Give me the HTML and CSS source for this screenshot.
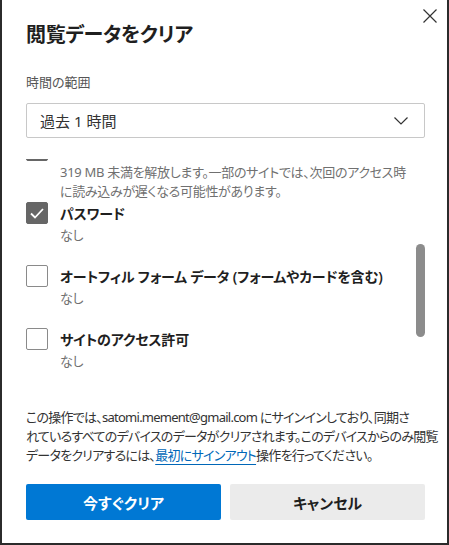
FILE: index.html
```html
<!DOCTYPE html>
<html lang="ja">
<head>
<meta charset="UTF-8">
<title>閲覧データをクリア</title>
<link rel="stylesheet" href="styles.css">
</head>
<body>

<div class="dialog">
    <button class="close" aria-label="閉じる">
        <svg width="14" height="14" viewBox="0 0 14 14"><path d="M0.5 0.5 L13.5 13.5 M13.5 0.5 L0.5 13.5" stroke="#333" stroke-width="1.2" fill="none"/></svg>
    </button>

    <h1>閲覧データをクリア</h1>

    <div class="field-label">時間の範囲</div>
    <div class="select">
        <span>過去 1 時間</span>
        <svg width="14" height="8" viewBox="0 0 14 8"><path d="M0.5 0.5 L7 7 L13.5 0.5" stroke="#333" stroke-width="1.2" fill="none"/></svg>
    </div>

    <!-- 一覧 (スクロール済み) -->
    <div class="list">
        <div class="items">
            <div class="item">
                <span class="box checked"></span>
                <div class="text">
                    <div class="name">キャッシュされた画像とファイル</div>
                    <div class="desc">319 MB 未満を解放します。一部のサイトでは、次回のアクセス時に読み込みが遅くなる可能性があります。</div>
                </div>
            </div>
            <div class="item">
                <span class="box checked">
                    <svg width="14" height="11" viewBox="0 0 14 11"><path d="M1 5.5 L5 9.5 L13 1" stroke="#fff" stroke-width="1.8" fill="none"/></svg>
                </span>
                <div class="text">
                    <div class="name">パスワード</div>
                    <div class="desc">なし</div>
                </div>
            </div>
            <div class="item">
                <span class="box"></span>
                <div class="text">
                    <div class="name">オートフィル フォーム データ (フォームやカードを含む)</div>
                    <div class="desc">なし</div>
                </div>
            </div>
            <div class="item">
                <span class="box"></span>
                <div class="text">
                    <div class="name">サイトのアクセス許可</div>
                    <div class="desc">なし</div>
                </div>
            </div>
            <div class="item">
                <span class="box"></span>
                <div class="text">
                    <div class="name">ホストされているアプリ データ</div>
                    <div class="desc">なし</div>
                </div>
            </div>
        </div>
        <div class="thumb"></div>
    </div>

    <p class="note">この操作では、satomi.mement@gmail.com にサインインしており、同期さ<br>れているすべてのデバイスのデータがクリアされます。このデバイスからのみ閲覧<br>データをクリアするには、<a href="#">最初にサインアウト</a>操作を行ってください。</p>

    <div class="buttons">
        <button class="btn primary">今すぐクリア</button>
        <button class="btn">キャンセル</button>
    </div>
</div>

</body>
</html>
```

FILE: styles.css
```css
body {
    margin: 0;
    font-family: "Noto Sans", "Noto Sans CJK JP", sans-serif;
    font-feature-settings: "palt";
    color: #222;
    background: #fff;
}
.dialog {
    position: relative;
    box-sizing: border-box;
    width: 449px;
    height: 545px;
    padding: 20px 22px 0 24px;
    border: 2px solid #2b2b2b;
    border-top: none;
}
.close {
    position: absolute;
    top: 9px;
    right: 10px;
    width: 14px;
    height: 14px;
    padding: 0;
    border: none;
    background: none;
    display: flex;
}

h1 {
    margin: 0;
    font-size: 20px;
    line-height: 30px;
    font-weight: 600;
    letter-spacing: -0.3px;
    color: #1f1f1f;
}
.field-label {
    margin-top: 23px;
    font-size: 13px;
    line-height: 18px;
    color: #555;
}
.select {
    margin-top: 12px;
    height: 35px;
    box-sizing: border-box;
    border: 1px solid #c8c8c8;
    border-radius: 2px;
    display: flex;
    align-items: center;
    justify-content: space-between;
    padding: 0 16px 0 13px;
    font-size: 15px;
    color: #333;
}

.list {
    position: relative;
    margin-top: 21px;
    height: 226px;
    overflow: hidden;
}
.items { margin-top: -20px; }
.item {
    display: flex;
    gap: 12px;
    min-height: 63px;
}
.box {
    flex: none;
    width: 22px;
    height: 22px;
    box-sizing: border-box;
    border: 1px solid #8a8a8a;
    border-radius: 2px;
    background: #fff;
    display: flex;
    align-items: center;
    justify-content: center;
}
.box.checked {
    background: #666;
    border-color: #666;
}
.text { padding-right: 8px; }
.name {
    font-size: 14px;
    line-height: 24px;
    font-weight: 600;
    letter-spacing: -0.2px;
    color: #1f1f1f;
}
.desc {
    font-size: 13px;
    line-height: 19px;
    letter-spacing: -0.3px;
    color: #707070;
}
.thumb {
    position: absolute;
    right: 0;
    top: 85px;
    width: 9px;
    height: 93px;
    border-radius: 5px;
    background: #8c8c8c;
}

.note {
    margin: 23px 0 0;
    font-size: 13px;
    line-height: 19px;
    letter-spacing: -0.75px;
    white-space: nowrap;
    color: #333;
}
.note a {
    color: #0067b8;
    text-decoration: underline;
    text-underline-offset: 4px;
}
.buttons {
    margin-top: 19px;
    display: grid;
    grid-template-columns: 1fr 1fr;
    gap: 9px;
}
.btn {
    height: 36px;
    border: none;
    border-radius: 2px;
    background: #ebebeb;
    color: #1f1f1f;
    font-family: inherit;
    font-feature-settings: "palt";
    font-size: 15px;
    font-weight: 600;
}
.btn.primary {
    background: #0078d4;
    color: #fff;
}
```
